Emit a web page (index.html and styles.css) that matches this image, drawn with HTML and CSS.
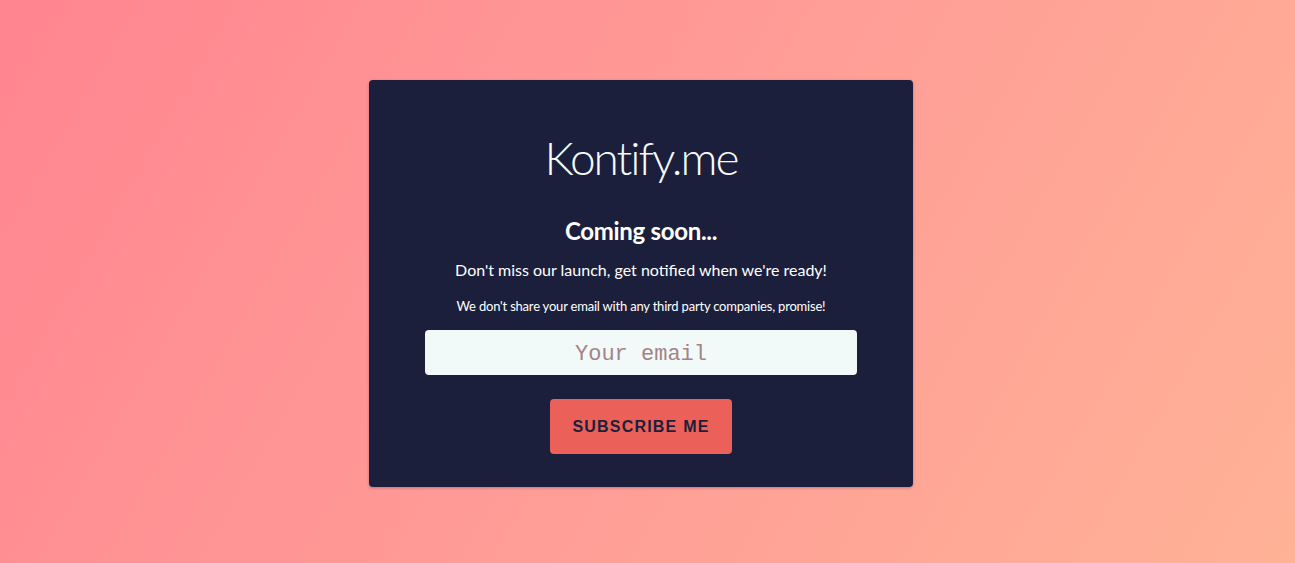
FILE: index.html
```html
<!DOCTYPE html>
<html lang="en">
<head>
<meta charset="utf-8">
<title>Kontify.me</title>
<link rel="stylesheet" href="styles.css">
</head>
<body>
<main class="page">
  <section class="card">
    <h1 class="logo">Kontify.me</h1>
    <h2 class="title">Coming soon...</h2>
    <p class="lead">Don't miss our launch, get notified when we're ready!</p>
    <p class="note">We don't share your email with any third party companies, promise!</p>
    <form class="form">
      <input class="email" type="email" placeholder="Your email">
      <button class="btn" type="button">SUBSCRIBE ME</button>
    </form>
  </section>
</main>
</body>
</html>
```
FILE: styles.css
```css
html, body {
  margin: 0;
  padding: 0;
  height: 100%;
}
body {
  background: linear-gradient(120deg, #ff8590 0%, #ff9a96 45%, #ffb296 100%);
  font-family: Lato, "Liberation Sans", sans-serif;
}
.page {
  height: 100%;
  display: flex;
  justify-content: center;
  align-items: flex-start;
  padding: 80px 13px 0 0;
  box-sizing: border-box;
}
.card {
  width: 544px;
  height: 407px;
  box-sizing: border-box;
  background: #1c1f3b;
  border-radius: 4px;
  box-shadow: 0 1px 3px rgba(60, 40, 80, 0.35);
  padding: 50px 56px 0;
  display: flex;
  flex-direction: column;
  align-items: center;
  color: #fff;
  text-align: center;
}
.logo {
  margin: 0;
  font-family: Lato, sans-serif;
  font-weight: 300;
  font-size: 46px;
  line-height: 56px;
  color: #f4fbfa;
  letter-spacing: -2px;
}
.title {
  margin: 30px 0 0;
  font-size: 24px;
  font-weight: 700;
  line-height: 30px;
  letter-spacing: -0.3px;
}
.lead {
  margin: 14px 0 0;
  font-size: 16px;
  line-height: 20px;
}
.note {
  margin: 18px 0 0;
  font-size: 13px;
  line-height: 16px;
  letter-spacing: -0.2px;
}
.form {
  width: 100%;
  display: flex;
  flex-direction: column;
  align-items: center;
  margin-top: 16px;
}
.email {
  width: 100%;
  height: 45px;
  box-sizing: border-box;
  padding: 4px 0 0;
  border: none;
  border-radius: 4px;
  background: #f1faf8;
  text-align: center;
  font-family: "Liberation Mono", monospace;
  font-size: 22px;
  outline: none;
}
.email::placeholder {
  color: #a68287;
}
.btn {
  margin-top: 24px;
  width: 182px;
  height: 55px;
  border: none;
  border-radius: 4px;
  background: #eb6159;
  color: #1c1f3b;
  font-family: "Liberation Sans", Arial, sans-serif;
  font-weight: 700;
  font-size: 16px;
  letter-spacing: 1.2px;
  cursor: pointer;
}
```
